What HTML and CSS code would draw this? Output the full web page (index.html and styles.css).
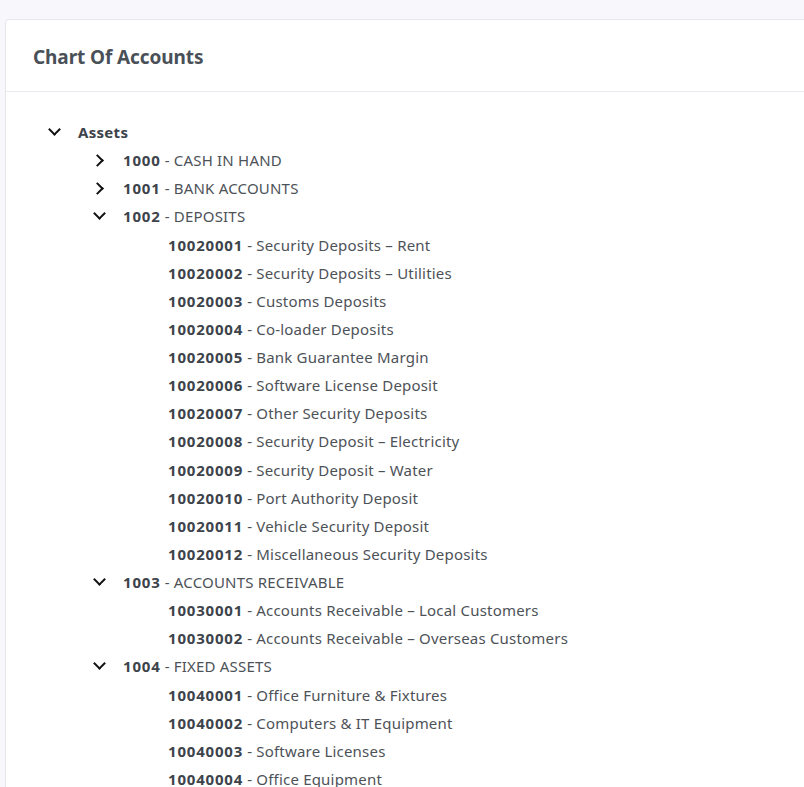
FILE: index.html
```html
<!DOCTYPE html>
<html>
<head>
<meta charset="utf-8">
<link rel="stylesheet" href="styles.css">
</head>
<body>
<div class="card">
  <div class="card-header"><h4 class="title">Chart Of Accounts</h4></div>
  <div class="card-body">
    <ul class="tree">
      <li>
        <div class="row"><span class="chev down"></span><span class="label strong">Assets</span></div>
        <ul class="tree">
          <li><div class="row"><span class="chev right"></span><span class="label"><b>1000</b> - CASH IN HAND</span></div></li>
          <li><div class="row"><span class="chev right"></span><span class="label"><b>1001</b> - BANK ACCOUNTS</span></div></li>
          <li>
            <div class="row"><span class="chev down"></span><span class="label"><b>1002</b> - DEPOSITS</span></div>
            <ul class="tree">
              <li><div class="row"><span class="chev"></span><span class="label"><b>10020001</b> - Security Deposits – Rent</span></div></li>
              <li><div class="row"><span class="chev"></span><span class="label"><b>10020002</b> - Security Deposits – Utilities</span></div></li>
              <li><div class="row"><span class="chev"></span><span class="label"><b>10020003</b> - Customs Deposits</span></div></li>
              <li><div class="row"><span class="chev"></span><span class="label"><b>10020004</b> - Co-loader Deposits</span></div></li>
              <li><div class="row"><span class="chev"></span><span class="label"><b>10020005</b> - Bank Guarantee Margin</span></div></li>
              <li><div class="row"><span class="chev"></span><span class="label"><b>10020006</b> - Software License Deposit</span></div></li>
              <li><div class="row"><span class="chev"></span><span class="label"><b>10020007</b> - Other Security Deposits</span></div></li>
              <li><div class="row"><span class="chev"></span><span class="label"><b>10020008</b> - Security Deposit – Electricity</span></div></li>
              <li><div class="row"><span class="chev"></span><span class="label"><b>10020009</b> - Security Deposit – Water</span></div></li>
              <li><div class="row"><span class="chev"></span><span class="label"><b>10020010</b> - Port Authority Deposit</span></div></li>
              <li><div class="row"><span class="chev"></span><span class="label"><b>10020011</b> - Vehicle Security Deposit</span></div></li>
              <li><div class="row"><span class="chev"></span><span class="label"><b>10020012</b> - Miscellaneous Security Deposits</span></div></li>
            </ul>
          </li>
          <li>
            <div class="row"><span class="chev down"></span><span class="label"><b>1003</b> - ACCOUNTS RECEIVABLE</span></div>
            <ul class="tree">
              <li><div class="row"><span class="chev"></span><span class="label"><b>10030001</b> - Accounts Receivable – Local Customers</span></div></li>
              <li><div class="row"><span class="chev"></span><span class="label"><b>10030002</b> - Accounts Receivable – Overseas Customers</span></div></li>
            </ul>
          </li>
          <li>
            <div class="row"><span class="chev down"></span><span class="label"><b>1004</b> - FIXED ASSETS</span></div>
            <ul class="tree">
              <li><div class="row"><span class="chev"></span><span class="label"><b>10040001</b> - Office Furniture &amp; Fixtures</span></div></li>
              <li><div class="row"><span class="chev"></span><span class="label"><b>10040002</b> - Computers &amp; IT Equipment</span></div></li>
              <li><div class="row"><span class="chev"></span><span class="label"><b>10040003</b> - Software Licenses</span></div></li>
              <li><div class="row"><span class="chev"></span><span class="label"><b>10040004</b> - Office Equipment</span></div></li>
            </ul>
          </li>
        </ul>
      </li>
    </ul>
  </div>
</div>
</body>
</html>
```
FILE: styles.css
```css
html, body {
  margin: 0;
  padding: 0;
}
body {
  background: #f8f8fc;
  font-family: "Noto Sans", "Open Sans", sans-serif;
  color: #495057;
  height: 787px;
  overflow: hidden;
  padding: 19px 0 0 5px;
  box-sizing: border-box;
}
.card {
  background: #fff;
  border: 1px solid #e6e6ec;
  border-right: none;
  border-radius: 4px 0 0 0;
  width: 820px;
  min-height: 900px;
}
.card-header {
  height: 72px;
  box-sizing: border-box;
  border-bottom: 1px solid #e9e9ef;
  display: flex;
  align-items: center;
  padding: 2px 0 0 27px;
}
.title {
  margin: 0;
  font-size: 19px;
  font-weight: 700;
  color: #495057;
  letter-spacing: -0.1px;
}
.card-body {
  padding: 26px 0 0 39px;
}
.tree {
  list-style: none;
  margin: 0;
  padding: 0;
}
.tree .tree {
  padding-left: 45px;
}
.row {
  display: flex;
  align-items: center;
  height: 28.13px;
}
.chev {
  width: 33px;
  flex: none;
  height: 16px;
  position: relative;
}
.chev.down::before {
  content: "";
  position: absolute;
  left: 5px;
  top: 1px;
  width: 7px;
  height: 7px;
  border-right: 2.5px solid #111;
  border-bottom: 2.5px solid #111;
  transform: rotate(45deg);
}
.chev.right::before {
  content: "";
  position: absolute;
  left: 3px;
  top: 4px;
  width: 7px;
  height: 7px;
  border-right: 2.5px solid #111;
  border-bottom: 2.5px solid #111;
  transform: rotate(-45deg);
}
.label {
  font-size: 15px;
  white-space: nowrap;
  color: #4d5258;
  letter-spacing: 0.2px;
}
.label b, .label.strong {
  font-weight: 700;
  color: #3d434a;
  letter-spacing: 0.8px;
}
.label.strong {
  letter-spacing: 0.3px;
}
```
